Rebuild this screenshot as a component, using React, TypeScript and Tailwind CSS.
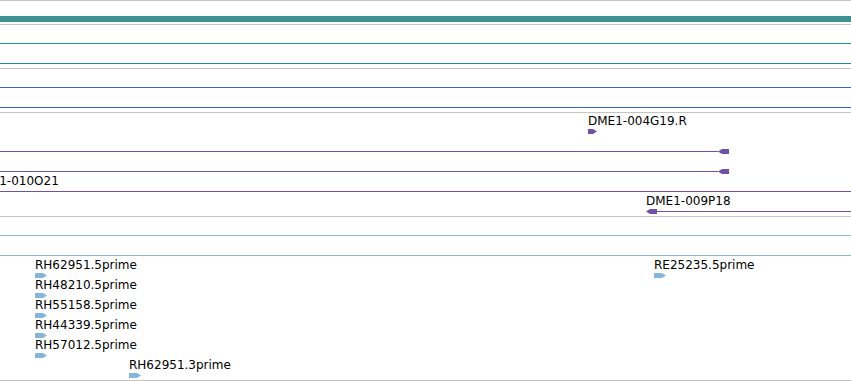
type Span = { from?: number; to?: number; head?: boolean };
type Tag = { text: string; x: number; arrow?: number };
type RowData = { span?: Span; tags?: Tag[] };

const WIDTH = 851;

function Head({ color }: { color: string }) {
  return (
    <svg width={11} height={5} viewBox="0 0 11 5" className="shrink-0">
      <polygon points="0,2.5 4,0 11,0 11,5 4,5" fill={color} />
    </svg>
  );
}

function Arrow({ w, color }: { w: number; color: string }) {
  return (
    <svg width={w} height={5} viewBox={`0 0 ${w} 5`}>
      <polygon points={`0,0 ${w - 4},0 ${w},2.5 ${w - 4},5 0,5`} fill={color} />
    </svg>
  );
}

function Row({ row, color }: { row: RowData; color: string }) {
  const s = row.span;
  const from = s?.from ?? 0;
  const to = s?.to ?? WIDTH;
  return (
    <div className="relative h-5 shrink-0">
      {s && (
        <div className="mt-4 flex h-[5px] items-center" style={{ paddingLeft: s.head && s.from !== undefined ? from - 9 : from }}>
          {s.head && s.from !== undefined && <Head color={color} />}
          <div className="h-px" style={{ width: to - from, background: color }} />
          {s.head && s.from === undefined && <Head color={color} />}
        </div>
      )}
      {row.tags?.map((t) => (
        <div key={t.text} className="absolute top-[2px] flex flex-col gap-[2px]" style={{ left: t.x }}>
          <span className="whitespace-nowrap text-[12px] leading-[12px] text-black">{t.text}</span>
          {t.arrow && <Arrow w={t.arrow} color={color} />}
        </div>
      ))}
    </div>
  );
}

function Track({ className, color, rows = [], children }: { className: string; color: string; rows?: RowData[]; children?: React.ReactNode }) {
  return (
    <div className={`flex flex-col overflow-hidden border-b border-[#c4c4c4] ${className}`}>
      {rows.map((r, i) => (
        <Row key={i} row={r} color={color} />
      ))}
      {children}
    </div>
  );
}

const clones: RowData[] = [
  { tags: [{ text: "DME1-004G19.R", x: 588, arrow: 9 }] },
  { span: { to: 718, head: true } },
  { span: { to: 718, head: true } },
  { span: {}, tags: [{ text: "DME1-010O21", x: -28 }] },
  { span: { from: 655, head: true }, tags: [{ text: "DME1-009P18", x: 646 }] },
];

const ests: RowData[] = [
  { span: {} },
  { span: {} },
  {
    tags: [
      { text: "RH62951.5prime", x: 35, arrow: 12 },
      { text: "RE25235.5prime", x: 654, arrow: 12 },
    ],
  },
  { tags: [{ text: "RH48210.5prime", x: 35, arrow: 12 }] },
  { tags: [{ text: "RH55158.5prime", x: 35, arrow: 12 }] },
  { tags: [{ text: "RH44339.5prime", x: 35, arrow: 12 }] },
  { tags: [{ text: "RH57012.5prime", x: 35, arrow: 12 }] },
  { tags: [{ text: "RH62951.3prime", x: 129, arrow: 12 }] },
];

export default function App() {
  return (
    <div
      className="flex h-[381px] w-[851px] flex-col overflow-hidden border-t border-[#c4c4c4] bg-white"
      style={{ fontFamily: '"DejaVu Sans", "Liberation Sans", sans-serif' }}
    >
      <Track className="h-6" color="#3e9292">
        <div className="mt-[15px] h-[6px] bg-[#3e9292]" />
      </Track>
      <Track className="h-[44px]" color="#2289ac" rows={[{ span: {} }, { span: {} }]} />
      <Track className="h-[44px]" color="#3767bb" rows={[{ span: {} }, { span: {} }]} />
      <Track className="h-[104px]" color="#6f51a6" rows={clones} />
      <Track className="h-[164px]" color="#86b6dc" rows={ests} />
    </div>
  );
}
